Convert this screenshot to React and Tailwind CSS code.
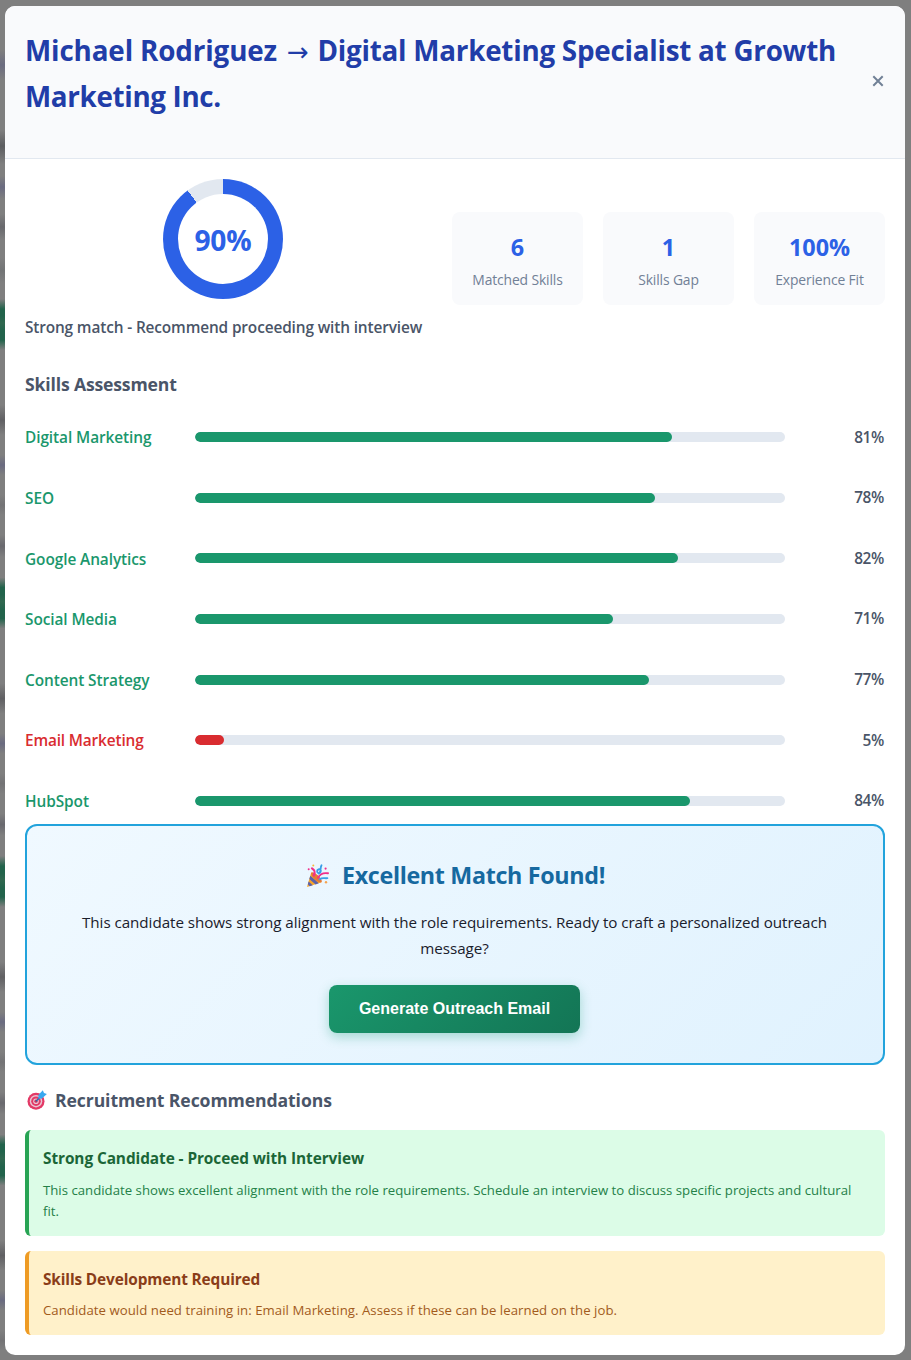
import React from "react";

const STATS = [
  { value: "6", label: "Matched Skills" },
  { value: "1", label: "Skills Gap" },
  { value: "100%", label: "Experience Fit" },
];

const SKILLS = [
  { name: "Digital Marketing", score: 81 },
  { name: "SEO", score: 78 },
  { name: "Google Analytics", score: 82 },
  { name: "Social Media", score: 71 },
  { name: "Content Strategy", score: 77 },
  { name: "Email Marketing", score: 5, missing: true },
  { name: "HubSpot", score: 84 },
];

function PartyPopper() {
  return (
    <svg viewBox="0 0 24 24" className="h-6 w-6 shrink-0" aria-hidden="true">
      <path d="M1 23 5.2 8.6Q10 10 15.6 18.2Z" fill="#f6a52c" />
      <path d="m4.3 11.7 8.5 7.5-3.2 1.2-6.3-5.3ZM2.6 17.5l4.2 3.8-3.1 1L1.8 20.3Z" fill="#5a62ad" />
      <ellipse cx="10.5" cy="13.3" rx="2.5" ry="7" transform="rotate(-47 10.5 13.3)" fill="#e67a35" />
      <path d="M7.7 11.5C10 7.5 8.2 5.8 6 4.3" fill="none" stroke="#f0308b" strokeWidth="2.2" strokeLinecap="round" />
      <path d="M12 13.8C14.2 9.8 18 8.6 22 9.3" fill="none" stroke="#f0308b" strokeWidth="1.9" strokeLinecap="round" />
      <path d="M13.7 15.4c2.5-2.2 4.5-.8 7.7-1.2M12.9 9.6c3-1.4 2.2-5.3-.4-4.2-2.6 1.3-.8 4.7.9 3.4 1.8-1.2.6-5 2.1-7.6" fill="none" stroke="#389ee8" strokeWidth="1.8" strokeLinecap="round" />
      <circle cx="7.3" cy="1.5" r="1" fill="#f9b936" />
      <circle cx="2.7" cy="5.2" r="1" fill="#f0308b" />
      <circle cx="19.6" cy="4.6" r="1.1" fill="#f0308b" />
      <circle cx="20" cy="18.3" r="1.2" fill="#f3a451" />
    </svg>
  );
}

function Target() {
  return (
    <svg viewBox="0 0 20 20" className="h-5 w-5 shrink-0" aria-hidden="true">
      <circle cx="9" cy="11.2" r="8.5" fill="#e33966" />
      <circle cx="9" cy="11.2" r="6.2" fill="#e9c5d3" />
      <circle cx="9" cy="11.2" r="4.8" fill="#e33966" />
      <circle cx="9" cy="11.2" r="2.8" fill="#e9c5d3" />
      <circle cx="9" cy="11.2" r="1.6" fill="#cf315b" />
      <path d="m9 11.2 5-5" stroke="#226bb0" strokeWidth="1.3" />
      <path d="m11.4 5 4.4-4.8 1.2 2.9 2.9.9-4.9 4.6-3.5.2Z" fill="#38a8ef" />
    </svg>
  );
}

function SkillRow({ name, score, missing }) {
  return (
    <div className="flex h-[25.6px] items-center">
      <div
        className={
          missing
            ? "w-[170px] pt-[1.4px] text-[15.4px] font-semibold tracking-[-0.16px] text-[#d92c30]"
            : "w-[170px] pt-[1.4px] text-[15.4px] font-semibold tracking-[-0.08px] text-[#1a976c]"
        }
      >
        {name}
      </div>
      <div className="h-2.5 w-[590px] overflow-hidden rounded-full bg-[#e2e8f0]">
        <div
          className={missing ? "h-full rounded-full bg-[#d92c30]" : "h-full rounded-full bg-[#1a976c]"}
          style={{ width: `calc(${score}% - 0.6px)` }}
        />
      </div>
      <div className="flex-1 pr-px text-right text-[15.4px] font-semibold tracking-[-0.35px] text-[#4a5568]">
        {score}%
      </div>
    </div>
  );
}

export default function App() {
  return (
    <div className="flex h-[1360px] w-[911px] overflow-hidden bg-[#7f7f7f] font-['Open_Sans','Noto_Sans',sans-serif]">
      <div className="flex w-[5px] shrink-0 flex-col">
        <div className="h-[80px] bg-[linear-gradient(#7f7f7f_50px,#6b6c80_65px,#7f7f7f_80px)]" />
        <div className="h-[205px] bg-[linear-gradient(#7f7f7f_50px,#5c5d60_66px,#7f7f7f_84px,#7f7f7f_96px,#6a6b80_107px,#7f7f7f_119px,#7f7f7f_134px,#68696d_147px,#7f7f7f_160px,#7f7f7f_178px,#727475_190px,#7f7f7f_203px)]" />
        <div className="flex-1 bg-[repeating-linear-gradient(#7f7f7f_0px,#7f7f7f_14px,#22634b_24px,#22634b_31px,#30674f_38px,#22634b_46px,#22634b_55px,#7f7f7f_65px,#7f7f7f_120px,#606063_135px,#7f7f7f_150px,#7f7f7f_170px,#6a6b80_180px,#7f7f7f_190px,#7f7f7f_210px,#737375_220px,#7f7f7f_230px,#7f7f7f_250px,#69696e_261px,#7f7f7f_272px,#7f7f7f_278.5px)]" />
      </div>

      <main className="mt-1.5 flex h-[1349px] w-[900px] shrink-0 flex-col overflow-hidden rounded-[10px] bg-white">
        <header className="flex h-[153px] shrink-0 items-center justify-between border-b border-[#e2e8f0] bg-[#f9fafc] pr-[19px] pl-5">
          <h1 className="mb-[18px] text-[27.8px] leading-[46px] font-bold tracking-[-0.25px] whitespace-nowrap text-[#213da8]">
            <span className="tracking-[-0.14px]">Michael Rodriguez</span>{" "}
            <span className="mr-[2px] ml-[3px] font-['DejaVu_Sans'] text-[26px] leading-none font-normal">→</span>{" "}
            Digital Marketing Specialist at Growth
            <br />
            <span className="tracking-[-0.35px]">Marketing Inc.</span>
          </h1>
          <button className="mb-0.5 flex h-6 w-4 items-center justify-center" aria-label="Close">
            <svg viewBox="0 0 12 12" className="h-3 w-3" aria-hidden="true">
              <path d="m1.3 1.3 9.4 9.4m0-9.4-9.4 9.4" stroke="#718096" strokeWidth="2" />
            </svg>
          </button>
        </header>

        <div className="flex flex-col px-5 pt-5">
          <section className="flex items-start gap-[30px]">
            <div className="flex w-[397px] flex-col items-center">
              <div className="mr-px flex h-[120px] w-[120px] items-center justify-center rounded-full bg-[conic-gradient(#2c61e6_90%,#e2e8f0_0)]">
                <div className="flex h-[90px] w-[90px] items-center justify-center rounded-full bg-white pt-0.5 text-[28.2px] font-bold tracking-[-0.15px] text-[#2c61e6]">
                  90%
                </div>
              </div>
              <p className="mt-4 text-[15.4px] leading-[26px] font-semibold tracking-[-0.13px] whitespace-nowrap text-[#4a5568]">
                Strong match - Recommend proceeding with interview
              </p>
            </div>
            <div className="mt-[33px] grid flex-1 grid-cols-3 gap-5">
              {STATS.map((stat) => (
                <div key={stat.label} className="flex h-[93px] flex-col items-center rounded-lg bg-[#f9fafc] pt-4">
                  <div className="text-[23.4px] leading-[38px] font-bold tracking-[-0.1px] text-[#2c61e6]">{stat.value}</div>
                  <div className="mt-0.5 text-[13.9px] leading-[23px] tracking-[-0.14px] whitespace-nowrap text-[#718096]">
                    {stat.label}
                  </div>
                </div>
              ))}
            </div>
          </section>

          <section className="mt-[28px]">
            <h2 className="text-[17.6px] leading-[30px] font-bold tracking-[-0.16px] text-[#4a5568]">Skills Assessment</h2>
            <div className="mt-[25.4px] flex flex-col gap-[35px]">
              {SKILLS.map((skill) => (
                <SkillRow key={skill.name} {...skill} />
              ))}
            </div>
          </section>

          <section className="mt-[10.4px] flex h-[241px] flex-col items-center rounded-xl border-2 border-[#22a3dc] bg-linear-135 from-[#f0f9ff] to-[#e0f2fe] pt-[31px]">
            <h2 className="flex h-[38px] items-center gap-3 pl-px text-[23.3px] font-bold tracking-[-0.34px] text-[#1669a0]">
              <PartyPopper />
              Excellent Match Found!
            </h2>
            <p className="mt-[14px] mr-px w-[780px] text-center text-[15.2px] leading-[26px] tracking-[-0.047px] text-[#1a202c]">
              This candidate shows strong alignment with the role requirements. Ready to craft a personalized outreach
              message?
            </p>
            <button className="mt-[24px] mr-px h-12 w-[251px] rounded-lg bg-linear-135 from-[#1a976c] to-[#137555] font-['Liberation_Sans',Arial,sans-serif] text-base font-bold text-white shadow-[0_4px_12px_rgba(5,150,105,0.3)]">
              Generate Outreach Email
            </button>
          </section>

          <section className="mt-5">
            <h2 className="flex h-[30px] items-center gap-[8px] pl-0.5 text-[17.6px] font-bold tracking-[-0.1px] text-[#4a5568]">
              <Target />
              Recruitment Recommendations
            </h2>
            <div className="mt-[15px] h-[106px] rounded-md border-l-4 border-[#28a454] bg-[#dcfce7] px-[14px] pt-[16px]">
              <h3 className="text-[15.4px] leading-[26px] font-bold tracking-[-0.08px] text-[#1b6637]">
                Strong Candidate - Proceed with Interview
              </h3>
              <p className="mt-[8px] text-[13.2px] leading-[21px] tracking-[0.01px] text-[#248148]">
                This candidate shows excellent alignment with the role requirements. Schedule an interview to discuss
                specific projects and cultural
                <br />
                fit.
              </p>
            </div>
            <div className="mt-[15px] h-[84px] rounded-md border-l-4 border-[#ee9b24] bg-[#fff1ca] px-[14px] pt-[16px]">
              <h3 className="text-[15.4px] leading-[26px] font-bold tracking-[-0.13px] text-[#8a3d18]">
                Skills Development Required
              </h3>
              <p className="mt-[7px] text-[13.2px] leading-[21px] tracking-[0.045px] text-[#a25b1c]">
                Candidate would need training in: Email Marketing. Assess if these can be learned on the job.
              </p>
            </div>
          </section>
        </div>
      </main>
    </div>
  );
}
